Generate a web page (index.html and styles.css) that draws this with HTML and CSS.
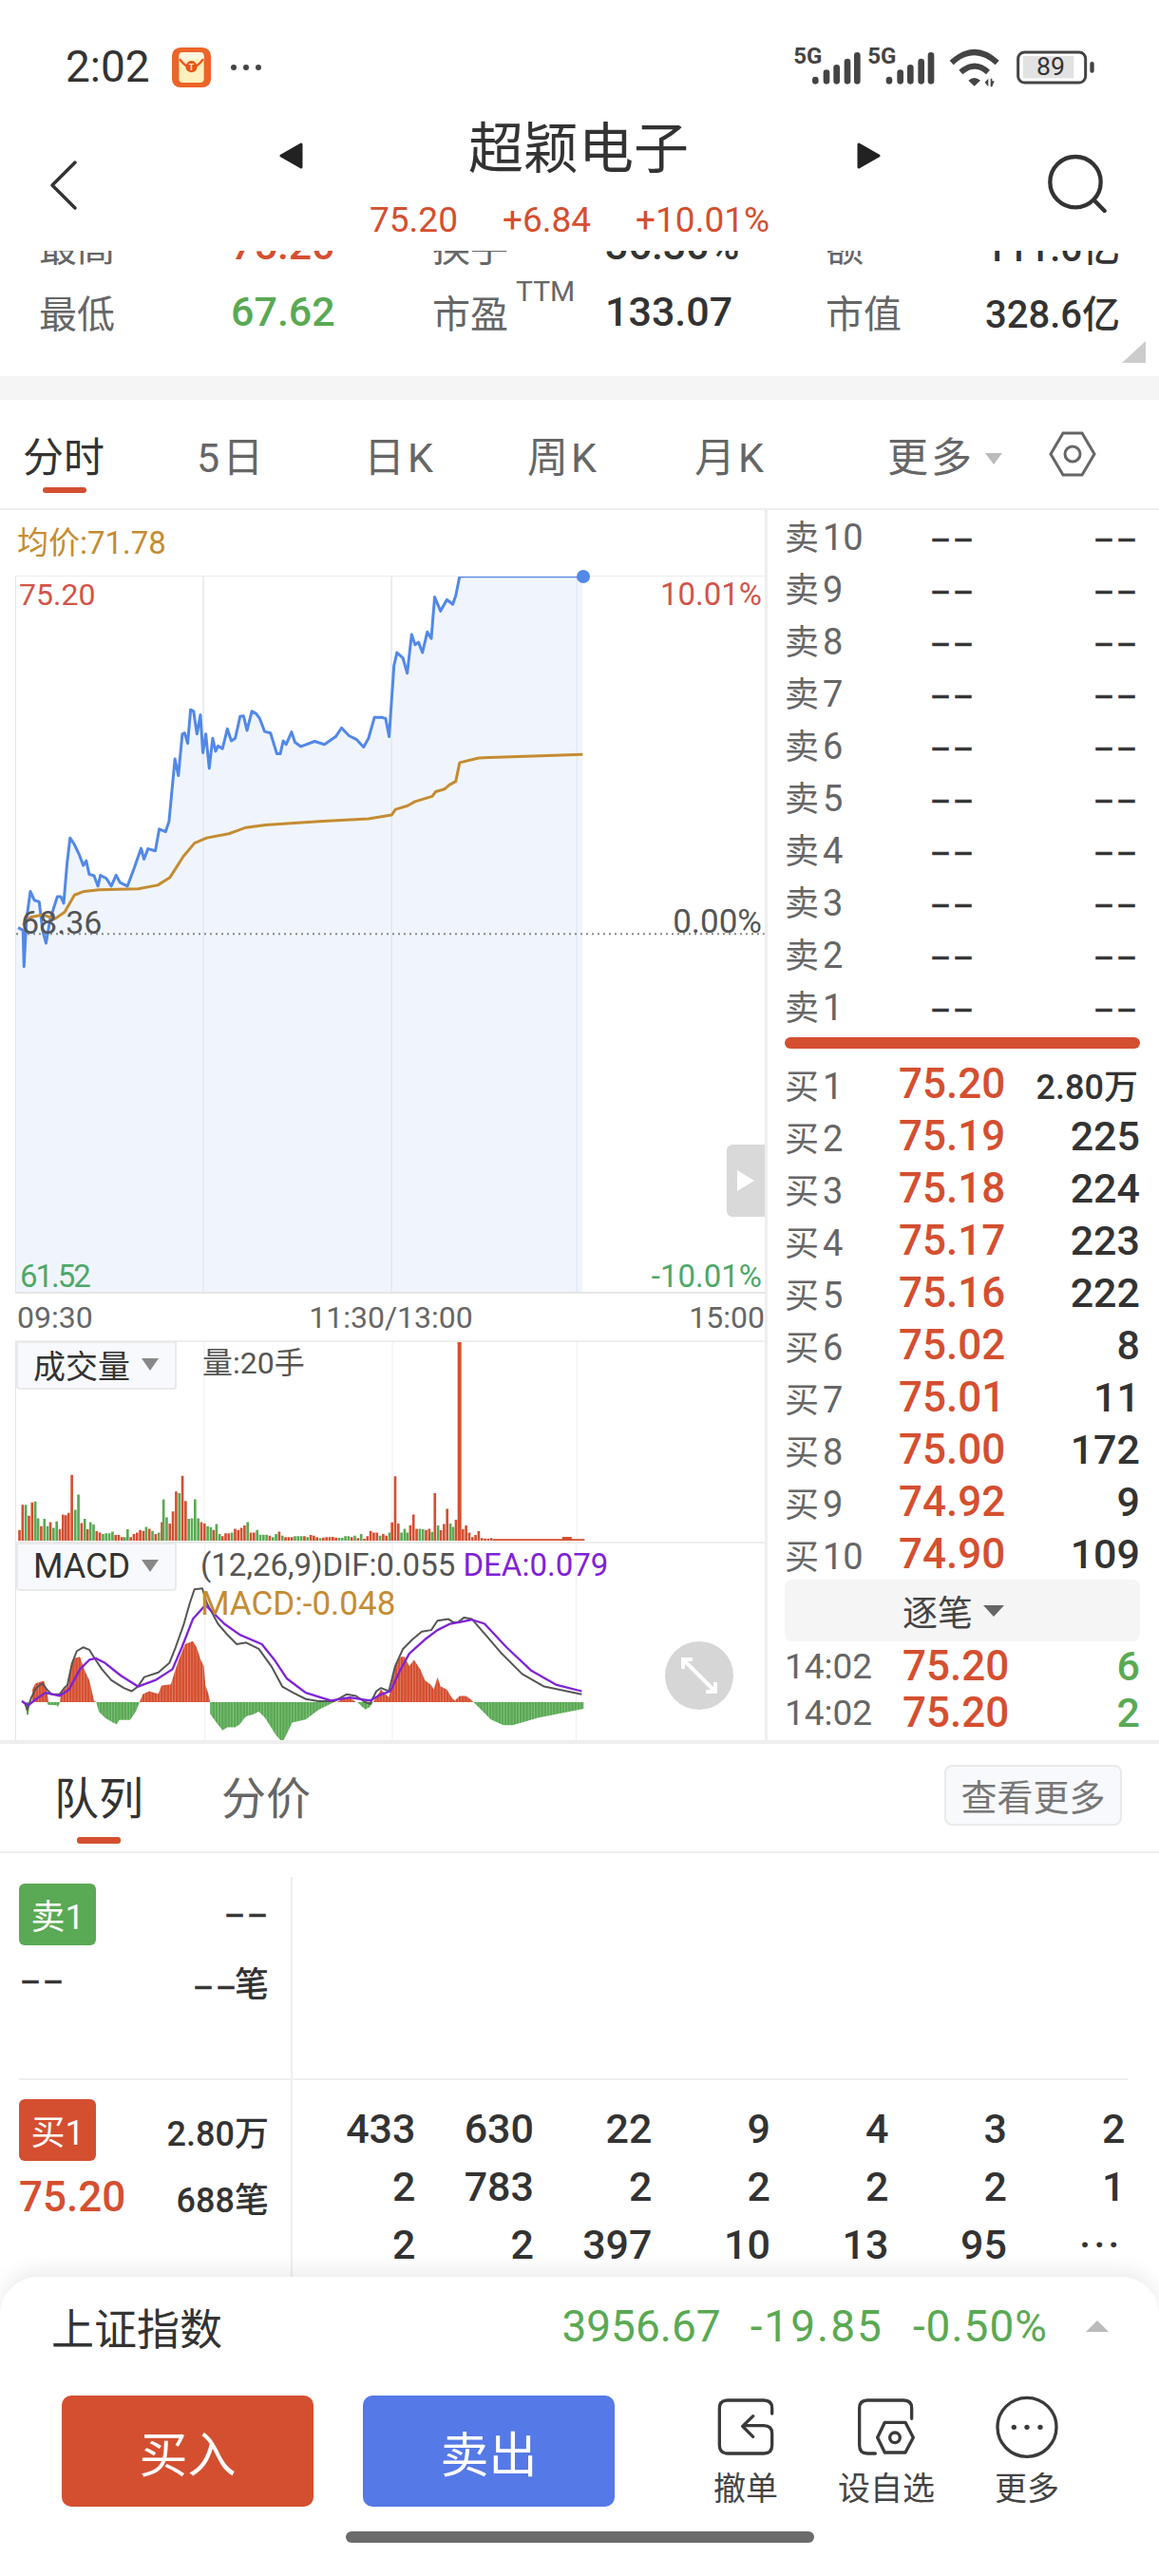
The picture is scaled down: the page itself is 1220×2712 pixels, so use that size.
FILE: index.html
```html
<!DOCTYPE html>
<html lang="zh-CN">
<head>
    <meta charset="UTF-8">
    <title>超颖电子</title>
    <link rel="stylesheet" href="styles.css">
</head>
<body>
<div class="page">
    <!-- status bar -->
    <div class="status">
        <span class="clock">2:02</span>
        <svg class="app-badge" viewBox="0 0 122 125">
            <rect width="122" height="125" rx="26" fill="#ec6428"/>
            <rect x="22" y="15" width="78" height="95" rx="12" fill="#fdf0bc"/>
            <path d="M22 28q0-13 13-13h52q13 0 13 13v10H22z" fill="#fff6e0"/>
            <path d="M24 36q18 26 37 26t37-26" fill="none" stroke="#e8541c" stroke-width="7"/>
            <circle cx="61" cy="60" r="18" fill="#e8541c"/>
            <text x="61" y="70" text-anchor="middle" class="badge-t">T</text>
        </svg>
        <svg class="more-dots" viewBox="0 0 32 6"><circle cx="3" cy="3" r="3"/><circle cx="16" cy="3" r="3"/><circle cx="29" cy="3" r="3"/></svg>
        <svg class="sys-icons" viewBox="0 0 1020 180">
            <text x="46" y="80" class="net">5G</text>
            <path class="sig" d="M115 132v4M150 110v26M182 94v42M216 75v61M247 55v81"/>
            <text x="280" y="80" class="net">5G</text>
            <path class="sig" d="M348 132v4M383 110v26M415 94v42M449 75v61M480 55v81"/>
            <path class="wifi" d="M545 78q72-66 144 0M574 108q43-38 86 0"/>
            <path d="M598 134q19-16 38 0l-19 18z" fill="#444"/>
            <path d="M650 140l11-12v26zM668 128h5v8h7l-7 18h-5z" fill="#444"/>
            <rect x="755" y="45" width="213" height="96" rx="20" class="bat"/>
            <rect x="771" y="57" width="160" height="70" fill="#e2e2e2"/>
            <text x="858" y="118" text-anchor="middle" class="bat-num">89</text>
            <rect x="982" y="75" width="13" height="35" rx="6" fill="#444"/>
        </svg>
    </div>

    <!-- title bar -->
    <div class="nav">
        <div class="nav-back">
            <svg width="32" height="54" viewBox="0 0 32 54"><path d="M28 3 4 27l24 24" class="line-icon"/></svg>
        </div>
        <svg class="nav-arrow" viewBox="0 0 25 28"><path d="M23 2 2 14l21 12z" fill="#222" stroke="#222" stroke-width="3" stroke-linejoin="round"/></svg>
        <div class="nav-title">
            <div class="stock-name">超颖电子</div>
            <div class="stock-price"><span>75.20</span><span>+6.84</span><span>+10.01%</span></div>
        </div>
        <svg class="nav-arrow" viewBox="0 0 25 28"><path d="M2 2l21 12L2 26z" fill="#222" stroke="#222" stroke-width="3" stroke-linejoin="round"/></svg>
        <svg class="nav-search" viewBox="70 30 192 192"><circle cx="160" cy="125" r="80" class="search-ring"/><path d="M222 185l30 31" class="search-ring"/></svg>
    </div>

    <!-- quote summary, top row is scrolled under the title bar -->
    <div class="stats">
        <div class="stat-row">
            <span>最高</span><b class="red">75.20</b>
            <span>换手</span><b>36.30%</b>
            <span>额</span><b class="small">111.6亿</b>
        </div>
        <div class="stat-row">
            <span>最低</span><b class="green">67.62</b>
            <span>市盈<sup>TTM</sup></span><b>133.07</b>
            <span>市值</span><b class="small">328.6亿</b>
        </div>
        <div class="corner"></div>
    </div>
    <div class="band"></div>

    <!-- period tabs -->
    <div class="tabs">
        <span class="tab active">分时</span>
        <span class="tab">5日</span>
        <span class="tab">日K</span>
        <span class="tab">周K</span>
        <span class="tab">月K</span>
        <span class="tab">更多<i class="tab-caret"></i></span>
        <svg class="tab-hex" viewBox="0 0 50 50"><path d="M15 3h20l13 22-13 22H15L2 25z" class="hex"/><circle cx="25" cy="25" r="8" class="hex"/></svg>
    </div>

    <div class="market">
        <div class="charts">
            <div class="avg">均价:71.78</div>
            <div class="price-chart">
                <svg viewBox="31 138.5 1527.5 1378" preserveAspectRatio="none">
                    <path d="M35 815 45 820 47 890 52 800 60 745 68 762 78 765 85 820 92 845 100 800 115 755 122 755 128 768 135 690 141 642 150 655 160 675 168 695 174 686 180 712 190 715 198 735 203 714 215 720 225 735 235 714 243 728 258 735 272 700 286 662 292 683 300 663 315 667 323 625 336 630 343 610 355 490 362 522 370 442 375 440 381 460 387 395 393 398 400 442 407 405 412 478 418 442 425 508 432 450 438 475 443 465 452 470 462 432 470 455 478 450 488 408 495 407 502 435 512 398 520 402 528 412 538 437 550 440 563 480 570 480 576 455 582 462 593 438 600 458 612 466 640 456 660 462 683 447 695 430 710 445 725 452 740 467 750 450 762 410 778 410 785 412 792 447 802 310 808 285 820 295 829 325 838 250 845 270 852 265 860 285 870 245 878 258 885 178 897 205 910 183 922 192 928 175 936 138H1187V1517H31V815Z" fill="#f0f5fd"/>
                    <path d="M413 138V1517M797 138V1517M1175 138V1517" class="grid-line"/>
                    <path d="M31 827H1558" class="zero-line"/>
                    <path d="M35 815 45 820 47 890 52 800 60 745 68 762 78 765 85 820 92 845 100 800 115 755 122 755 128 768 135 690 141 642 150 655 160 675 168 695 174 686 180 712 190 715 198 735 203 714 215 720 225 735 235 714 243 728 258 735 272 700 286 662 292 683 300 663 315 667 323 625 336 630 343 610 355 490 362 522 370 442 375 440 381 460 387 395 393 398 400 442 407 405 412 478 418 442 425 508 432 450 438 475 443 465 452 470 462 432 470 455 478 450 488 408 495 407 502 435 512 398 520 402 528 412 538 437 550 440 563 480 570 480 576 455 582 462 593 438 600 458 612 466 640 456 660 462 683 447 695 430 710 445 725 452 740 467 750 450 762 410 778 410 785 412 792 447 802 310 808 285 820 295 829 325 838 250 845 270 852 265 860 285 870 245 878 258 885 178 897 205 910 183 922 192 928 175 936 138H1187" class="price-line"/>
                    <path d="M45 810 60 795 85 790 110 798 130 785 150 752 170 745 200 742 280 740 320 733 345 718 372 678 395 652 420 642 465 634 500 622 540 617 650 610 750 605 797 598 805 587 830 580 845 572 880 562 887 553 905 548 915 540 928 533 936 497 975 488 1100 484 1187 481" class="avg-line"/>
                </svg>
                <i class="last-dot"></i>
                <span class="pl top-l red-soft">75.20</span>
                <span class="pl top-r red-soft">10.01%</span>
                <span class="pl mid-l">68.36</span>
                <span class="pl mid-r">0.00%</span>
                <span class="pl bot-l green-soft">61.52</span>
                <span class="pl bot-r green-soft">-10.01%</span>
                <div class="side-handle"><i></i></div>
            </div>
            <div class="times"><span>09:30</span><span>11:30/13:00</span><span>15:00</span></div>

            <div class="sub-panel">
                <svg viewBox="48 36 2367 633">
                    <path d="M639 36V669M1236 36V669M1822 36V669" class="sub-grid"/>
                    <path class="vol-r" d="M53 632V666M63 552V666M83 587V666M93 545V666M122 620V666M151 607V666M181 630V666M191 583V666M200 585V666M209 578V666M219 457V666M250 610V666M269 630V666M298 636V666M308 640V666M358 648V666M368 648V666M378 655V666M406 655V666M416 645V666M426 640V666M436 632V666M446 635V666M465 628V666M485 645V666M505 607V666M530 612V666M540 573V666M550 510V666M570 460V666M580 540V666M630 607V666M640 612V666M669 632V666M697 652V666M707 643V666M717 643V666M737 628V666M747 632V666M757 625V666M767 618V666M787 640V666M797 640V666M847 650V666M877 637V666M897 655V666M907 655V666M917 655V666M957 652V666M977 648V666M987 650V666M997 655V666M1017 656V666M1027 655V666M1037 655V666M1047 654V666M1057 656V666M1107 655V666M1127 658V666M1147 660V666M1157 652V666M1167 635V666M1177 640V666M1187 640V666M1207 645V666M1217 650V666M1235 608V666M1245 462V666M1255 612V666M1293 617V666M1303 583V666M1313 628V666M1343 632V666M1353 628V666M1371 515V666M1390 633V666M1400 613V666M1410 565V666M1438 600V666M1460 630V666M1470 618V666M1480 640V666M1490 655V666M1500 648V666M1510 636V666M1520 658V666M1530 659V666M1540 660V666M1550 658V666"/>
                    <path class="vol-g" d="M73 552V666M103 542V666M112 595V666M132 597V666M142 620V666M161 625V666M171 605V666M230 568V666M240 520V666M260 597V666M278 607V666M288 615V666M318 645V666M328 643V666M338 643V666M348 637V666M387 655V666M396 630V666M455 622V666M475 635V666M495 640V666M510 535V666M520 592V666M560 515V666M590 597V666M600 595V666M610 535V666M620 595V666M650 620V666M660 623V666M678 613V666M688 645V666M727 640V666M777 607V666M807 632V666M817 647V666M827 647V666M837 647V666M857 655V666M867 645V666M887 650V666M927 652V666M937 652V666M947 652V666M967 655V666M1007 658V666M1067 657V666M1077 657V666M1087 652V666M1097 652V666M1117 650V666M1137 645V666M1197 650V666M1227 640V666M1265 640V666M1275 628V666M1284 640V666M1323 628V666M1333 630V666M1362 638V666M1381 618V666M1420 612V666M1429 622V666"/>
                    <rect x="1443" y="36" width="12" height="630" fill="#d44f30"/>
                    <path d="M1555 661H1775V654H1805V661H1846V666H1555Z" fill="#d44f30"/>
                </svg>
                <div class="sub-tag">成交量<i class="tag-caret"></i></div>
                <div class="sub-info vol-info">量:20手</div>
            </div>

            <div class="sub-panel macd">
                <svg viewBox="48 669 2367 627">
                    <defs>
                        <pattern id="barsRed" width="9.7" height="10" patternUnits="userSpaceOnUse"><rect width="9.7" height="10" fill="#d44f30"/><rect width="1.6" height="10" fill="#eb9a84"/></pattern>
                        <pattern id="barsGreen" width="9.7" height="10" patternUnits="userSpaceOnUse"><rect width="9.7" height="10" fill="#5aa954"/><rect width="1.6" height="10" fill="#9fd09b"/></pattern>
                    </defs>
                    <path d="M639 669V1296M1236 669V1296M1822 669V1296" class="sub-grid"/>
                    <path fill="url(#barsRed)" d="M88 1175V1135L98 1115 125 1107 135 1140 140 1175ZM176 1175 180 1145 200 1125 212 1060 222 1035 240 1030 250 1060 258 1080 270 1105 278 1140 285 1170 292 1175ZM430 1175 440 1150 460 1140 490 1148 500 1122 530 1118 540 1085 555 1040 575 990 600 980 612 1000 625 1040 635 1060 640 1120 650 1150 655 1175ZM1060 1175 1075 1165 1100 1160 1120 1175ZM1175 1175 1200 1135 1225 1160 1245 1060 1262 1030 1275 1030 1290 1060 1305 1040 1325 1070 1340 1105 1360 1120 1368 1135 1380 1095 1390 1125 1410 1135 1425 1160 1435 1170 1450 1155 1470 1155 1485 1165 1495 1175Z"/>
                    <path fill="url(#barsGreen)" d="M68 1175 70 1215H76L80 1175ZM135 1175 138 1183 165 1185 170 1190 176 1175ZM292 1175 300 1205 320 1225 345 1240 358 1245 365 1232H400L418 1205 430 1175ZM655 1175V1212L675 1240 695 1265 710 1255H735L750 1245 765 1225 775 1218 790 1215 810 1205 830 1225 865 1280 880 1297 890 1295 905 1265 917 1240 960 1230 1000 1200 1050 1175ZM1125 1175 1140 1190 1150 1198 1165 1190 1175 1175ZM1495 1175 1520 1200 1550 1230 1590 1248H1620L1700 1225 1846 1196V1175Z"/>
                    <path class="dif" d="M55 1172 65 1180 72 1200 85 1160 100 1130 120 1115 135 1135 150 1150H175L190 1130 200 1120 215 1050 230 1012 250 1000 270 1008 290 1040 310 1070 340 1105 380 1130 405 1140 425 1125 445 1095 490 1080 525 1050 545 1000 570 930 590 860 605 815 630 812 645 860 680 925 710 960 740 990 770 985 810 1005 850 1060 885 1125 920 1145 960 1165 1000 1172H1050L1090 1150 1120 1155 1150 1175 1165 1180 1185 1140 1200 1130 1225 1140 1245 1060 1270 1005 1300 975 1330 950 1360 945 1380 915 1415 910 1430 920H1445L1465 905 1490 910 1520 945 1580 1015 1650 1085 1720 1125 1840 1150"/>
                    <path class="dea" d="M55 1172 75 1185 100 1165 130 1145 175 1155 205 1135 240 1070 270 1040 290 1035 320 1050 370 1090 425 1125 480 1105 535 1070 565 1000 600 910 640 865 700 925 750 960 820 990 860 1040 900 1100 960 1145 1040 1170 1100 1160 1165 1170 1200 1150 1230 1140 1260 1075 1290 1020 1340 975 1380 945 1420 925 1450 920 1490 912 1530 925 1600 1000 1680 1075 1760 1120 1840 1140"/>
                </svg>
                <div class="sub-tag tag-latin">MACD<i class="tag-caret"></i></div>
                <div class="sub-info macd-info">
                    <div>(12,26,9)DIF:0.055 <span class="purple">DEA:0.079</span></div>
                    <div class="gold">MACD:-0.048</div>
                </div>
                <div class="expand">
                    <svg width="42" height="42" viewBox="0 0 42 42"><path d="M4 14V4H14M4 4l34 34M28 38H38V28" class="expand-arrow"/></svg>
                </div>
            </div>
        </div>

        <!-- order book -->
        <div class="book">
            <div class="book-row"><span class="lvl">卖<span>10</span></span><span class="px"><span class="dash">--</span></span><span class="qty"><span class="dash">--</span></span></div>
            <div class="book-row"><span class="lvl">卖<span>9</span></span><span class="px"><span class="dash">--</span></span><span class="qty"><span class="dash">--</span></span></div>
            <div class="book-row"><span class="lvl">卖<span>8</span></span><span class="px"><span class="dash">--</span></span><span class="qty"><span class="dash">--</span></span></div>
            <div class="book-row"><span class="lvl">卖<span>7</span></span><span class="px"><span class="dash">--</span></span><span class="qty"><span class="dash">--</span></span></div>
            <div class="book-row"><span class="lvl">卖<span>6</span></span><span class="px"><span class="dash">--</span></span><span class="qty"><span class="dash">--</span></span></div>
            <div class="book-row"><span class="lvl">卖<span>5</span></span><span class="px"><span class="dash">--</span></span><span class="qty"><span class="dash">--</span></span></div>
            <div class="book-row"><span class="lvl">卖<span>4</span></span><span class="px"><span class="dash">--</span></span><span class="qty"><span class="dash">--</span></span></div>
            <div class="book-row"><span class="lvl">卖<span>3</span></span><span class="px"><span class="dash">--</span></span><span class="qty"><span class="dash">--</span></span></div>
            <div class="book-row"><span class="lvl">卖<span>2</span></span><span class="px"><span class="dash">--</span></span><span class="qty"><span class="dash">--</span></span></div>
            <div class="book-row"><span class="lvl">卖<span>1</span></span><span class="px"><span class="dash">--</span></span><span class="qty"><span class="dash">--</span></span></div>
            <div class="book-split"></div>
            <div class="book-row"><span class="lvl">买<span>1</span></span><span class="px red">75.20</span><span class="qty qty-sm">2.80万</span></div>
            <div class="book-row"><span class="lvl">买<span>2</span></span><span class="px red">75.19</span><span class="qty">225</span></div>
            <div class="book-row"><span class="lvl">买<span>3</span></span><span class="px red">75.18</span><span class="qty">224</span></div>
            <div class="book-row"><span class="lvl">买<span>4</span></span><span class="px red">75.17</span><span class="qty">223</span></div>
            <div class="book-row"><span class="lvl">买<span>5</span></span><span class="px red">75.16</span><span class="qty">222</span></div>
            <div class="book-row"><span class="lvl">买<span>6</span></span><span class="px red">75.02</span><span class="qty">8</span></div>
            <div class="book-row"><span class="lvl">买<span>7</span></span><span class="px red">75.01</span><span class="qty">11</span></div>
            <div class="book-row"><span class="lvl">买<span>8</span></span><span class="px red">75.00</span><span class="qty">172</span></div>
            <div class="book-row"><span class="lvl">买<span>9</span></span><span class="px red">74.92</span><span class="qty">9</span></div>
            <div class="book-row"><span class="lvl">买<span>10</span></span><span class="px red">74.90</span><span class="qty">109</span></div>
            <div class="tick-head">逐笔<i class="tick-caret"></i></div>
            <div class="tick-row"><span class="tick-time">14:02</span><span class="tick-px red">75.20</span><span class="qty green">6</span></div>
            <div class="tick-row"><span class="tick-time">14:02</span><span class="tick-px red">75.20</span><span class="qty green">2</span></div>
        </div>
    </div>

    <!-- order queue -->
    <div class="queue-head">
        <span class="q-tab active">队列</span>
        <span class="q-tab">分价</span>
        <span class="see-more">查看更多</span>
    </div>
    <div class="queue">
        <div class="q-sell">
            <div class="q-side">
                <div class="q-line"><span class="tag tag-sell">卖1</span><span class="dash">--</span></div>
                <div class="q-line q-line2"><span class="dash">--</span><span class="q-count"><span class="dash">--</span>笔</span></div>
            </div>
        </div>
        <div class="q-buy">
            <div class="q-side">
                <div class="q-line"><span class="tag tag-buy">买1</span><span class="q-vol">2.80万</span></div>
                <div class="q-line q-line3"><span class="q-price red">75.20</span><span class="q-vol">688笔</span></div>
            </div>
            <div class="q-grid">
                <span>433</span><span>630</span><span>22</span><span>9</span><span>4</span><span>3</span><span>2</span>
                <span>2</span><span>783</span><span>2</span><span>2</span><span>2</span><span>2</span><span>1</span>
                <span>2</span><span>2</span><span>397</span><span>10</span><span>13</span><span>95</span><span class="q-more">···</span>
            </div>
        </div>
    </div>

    <!-- bottom sheet -->
    <div class="sheet">
        <div class="index-row">
            <span class="index-name">上证指数</span>
            <span class="index-nums"><span>3956.67</span><span class="wide">-19.85</span><span class="wider">-0.50%</span></span>
            <i class="index-caret"></i>
        </div>
        <div class="actions">
            <div class="btn btn-buy">买入</div>
            <div class="btn btn-sell">卖出</div>
            <div class="action">
                <svg viewBox="36 35 198 198"><path d="M218 92V75Q218 50 192 50H78Q52 50 52 76V192Q52 218 78 218H192Q218 218 218 192V155Q218 130 192 130H130M158 100 125 132 158 165" class="act-line"/></svg>
                <span>撤单</span>
            </div>
            <div class="action">
                <svg viewBox="481 35 198 198"><path d="M660 108V75Q660 50 635 50H520Q495 50 495 75V192Q495 218 520 218H545M575 120H640L665 168 640 215H575L552 168Z" class="act-line"/><circle cx="607" cy="168" r="16" class="act-line"/></svg>
                <span>设自选</span>
            </div>
            <div class="action">
                <svg viewBox="927 35 198 198"><circle cx="1026" cy="135" r="93" class="act-line"/><circle cx="985" cy="135" r="8" fill="#3a3a3a"/><circle cx="1026" cy="135" r="8" fill="#3a3a3a"/><circle cx="1068" cy="135" r="8" fill="#3a3a3a"/></svg>
                <span>更多</span>
            </div>
        </div>
        <div class="home-bar"></div>
    </div>
</div>
</body>
</html>
```
FILE: styles.css
```css
* {
    box-sizing: border-box;
}

body {
    margin: 0;
    background: #fff;
    font-family: Roboto, "Noto Sans CJK SC", sans-serif;
    color: #333;
}

.page {
    position: relative;
    width: 1220px;
    height: 2712px;
    overflow: hidden;
    background: #fff;
}

.red { color: #d44f30; }
.green { color: #5aa954; }
.purple { color: #7f22d8; }
.gold { color: #c58c32; }
.red-soft { color: #d2544a; }
.green-soft { color: #4da868; }

/* status bar */
.status {
    display: flex;
    height: 100px;
    padding: 40px 60px 0 69px;
}

.clock {
    font-size: 46px;
    line-height: 60px;
    color: #333;
}

.app-badge {
    width: 41px;
    height: 42px;
    margin: 10px 0 0 23px;
}

.badge-t {
    font: 700 28px Roboto, sans-serif;
    fill: #fdf0bc;
}

.more-dots {
    width: 32px;
    height: 6px;
    margin: 28px 0 0 21px;
    fill: #444;
}

.sys-icons {
    width: 340px;
    height: 60px;
    margin-left: auto;
}

.net {
    font: 700 72px Roboto, sans-serif;
    fill: #444;
}

.sig {
    stroke: #444;
    stroke-width: 20px;
    stroke-linecap: round;
    fill: none;
}

.wifi {
    stroke: #444;
    stroke-width: 18px;
    fill: none;
}

.bat {
    fill: none;
    stroke: #444;
    stroke-width: 9px;
}

.bat-num {
    font: 400 80px Roboto, sans-serif;
    fill: #333;
}

/* title bar */
.nav {
    display: flex;
    align-items: flex-start;
    height: 164px;
}

.nav-back {
    width: 294px;
    padding: 68px 0 0 51px;
}

.line-icon {
    fill: none;
    stroke: #333;
    stroke-width: 3.5px;
    stroke-linecap: round;
    stroke-linejoin: round;
}

.nav-arrow {
    width: 25px;
    height: 28px;
    margin-top: 50px;
}

.nav-title {
    width: 583px;
    padding-top: 27px;
}

.stock-name {
    padding-left: 174px;
    font-size: 58px;
    line-height: 60px;
    color: #333;
}

.stock-price {
    display: flex;
    gap: 47px;
    padding-left: 70px;
    margin-top: 23px;
    font-size: 37px;
    line-height: 44px;
    color: #d44f30;
}

.nav-search {
    width: 64px;
    height: 64px;
    margin: 60px 0 0 175px;
}

.search-ring {
    fill: none;
    stroke: #333;
    stroke-width: 13px;
    stroke-linecap: round;
}

/* stats */
.stats {
    position: relative;
    display: flex;
    flex-direction: column;
    justify-content: flex-end;
    height: 132px;
    padding: 0 0 33px 41px;
    overflow: hidden;
}

.stat-row {
    display: grid;
    flex: none;
    grid-template-columns: 202px 212px 182px 232px 168px 142px;
    align-items: center;
    height: 70px;
    font-size: 40px;
    color: #666;
    white-space: nowrap;
}

.stat-row b {
    font-size: 43px;
    font-weight: 500;
    color: #333;
}

.stat-row b.red { color: #d44f30; }
.stat-row b.green { color: #5aa954; }

.stat-row b.small {
    font-size: 40px;
    text-align: right;
}

.stat-row sup {
    position: relative;
    top: -28px;
    margin-left: 8px;
    font-size: 30px;
    line-height: 0;
    vertical-align: baseline;
}

.corner {
    position: absolute;
    right: 14px;
    bottom: 14px;
    border-left: 25px solid transparent;
    border-bottom: 23px solid #ccc;
}

.band {
    height: 25px;
    background: #f5f5f5;
}

/* period tabs */
.tabs {
    display: grid;
    grid-template-columns: 183px 176px 172px 176px 203px 170px 50px;
    align-items: center;
    height: 116px;
    padding-left: 24px;
    border-bottom: 2px solid #eee;
}

.tab {
    position: relative;
    font-size: 43px;
    letter-spacing: 3px;
    color: #666;
}

.tab.active {
    letter-spacing: 0;
    color: #333;
}

.tab.active::after {
    content: "";
    position: absolute;
    left: 21px;
    bottom: -10px;
    width: 46px;
    height: 6px;
    border-radius: 3px;
    background: #d44f30;
}

.tab-caret {
    display: inline-block;
    margin-left: 11px;
    border-left: 9px solid transparent;
    border-right: 9px solid transparent;
    border-top: 12px solid #bbb;
    vertical-align: 8px;
}

.tab-hex {
    width: 50px;
    height: 50px;
}

.hex {
    fill: none;
    stroke: #666;
    stroke-width: 3px;
}

/* charts */
.market {
    display: flex;
    height: 1299px;
    border-bottom: 4px solid #eee;
}

.charts {
    flex: none;
    width: 808px;
    padding-left: 16px;
    border-right: 3px solid #eee;
}

.avg {
    height: 69px;
    margin-left: 2px;
    padding-top: 15px;
    font-size: 33px;
    line-height: 40px;
    color: #c58c32;
}

.price-chart {
    position: relative;
    height: 756px;
    border-top: 1px solid #eee;
    border-bottom: 2px solid #e6e6e6;
    border-left: 1px solid #e6e6e6;
}

.price-chart svg {
    display: block;
    width: 100%;
    height: 100%;
}

.grid-line {
    fill: none;
    stroke: #e4e8ef;
    stroke-width: 1.5px;
    vector-effect: non-scaling-stroke;
}

.zero-line {
    fill: none;
    stroke: #888;
    stroke-width: 2px;
    stroke-dasharray: 2 4;
    vector-effect: non-scaling-stroke;
}

.price-line {
    fill: none;
    stroke: #5288e8;
    stroke-width: 3px;
    stroke-linejoin: round;
    vector-effect: non-scaling-stroke;
}

.avg-line {
    fill: none;
    stroke: #c58c32;
    stroke-width: 3px;
    stroke-linejoin: round;
    vector-effect: non-scaling-stroke;
}

.last-dot {
    position: absolute;
    left: 590px;
    top: -7px;
    width: 14px;
    height: 14px;
    border-radius: 50%;
    background: #5288e8;
}

.pl {
    position: absolute;
    font-size: 33px;
    line-height: 40px;
    color: #555;
}

.pl.red-soft { color: #d2544a; }
.pl.green-soft { color: #4da868; }

.top-l { left: 3px; top: -1px; font-size: 32px; }
.top-r { right: 3px; top: -1px; }
.mid-l { left: 5px; top: 344px; font-size: 34px; }
.mid-r { right: 3px; top: 344px; font-size: 35px; }
.bot-l { left: 4px; top: 717px; letter-spacing: -2px; }
.bot-r { right: 3px; top: 717px; }

.side-handle {
    position: absolute;
    right: 0;
    top: 598px;
    display: flex;
    align-items: center;
    justify-content: center;
    width: 40px;
    height: 76px;
    border-radius: 6px 0 0 6px;
    background: #d9d9d9;
}

.side-handle i {
    border-top: 11px solid transparent;
    border-bottom: 11px solid transparent;
    border-left: 18px solid #fff;
}

.times {
    display: flex;
    justify-content: space-between;
    align-items: center;
    height: 49px;
    padding-left: 2px;
    font-size: 32px;
    color: #666;
}

.sub-panel {
    position: relative;
    height: 212px;
    border-top: 2px solid #eee;
    border-left: 1px solid #e6e6e6;
}

.sub-panel svg {
    display: block;
}

.sub-panel > svg {
    width: 789px;
    height: 210px;
}

.macd {
    height: 209px;
}

.macd > svg {
    height: 207px;
}

.sub-grid {
    fill: none;
    stroke: #eee;
    stroke-width: 3px;
}

.vol-r, .vol-g {
    fill: none;
    stroke-width: 8px;
}

.vol-r { stroke: #d44f30; }
.vol-g { stroke: #5aa954; }

.dif, .dea {
    fill: none;
    stroke-linejoin: round;
}

.dif { stroke: #555; stroke-width: 6px; }
.dea { stroke: #7f22d8; stroke-width: 7px; }

.sub-tag {
    position: absolute;
    left: 0;
    top: -1px;
    display: flex;
    align-items: center;
    width: 169px;
    height: 51px;
    padding: 0 0 2px 16px;
    border: 2px solid #eaeaea;
    border-radius: 0 0 4px 4px;
    background: #f8f9fc;
    font-size: 34px;
    color: #333;
}

.tag-latin {
    font-size: 36px;
}

.tag-caret {
    margin-left: 12px;
    border-left: 9px solid transparent;
    border-right: 9px solid transparent;
    border-top: 13px solid #888;
}

.sub-info {
    position: absolute;
    left: 194px;
    font-size: 33px;
    line-height: 40px;
    color: #555;
    white-space: nowrap;
}

.vol-info { left: 196px; top: 2px; font-size: 32px; }
.macd-info { top: 2px; line-height: 41px; }
.macd-info .gold { font-size: 35px; }

.expand {
    position: absolute;
    left: 683px;
    top: 103px;
    display: flex;
    align-items: center;
    justify-content: center;
    width: 72px;
    height: 72px;
    border-radius: 50%;
    background: #d6d6d6;
}

.expand-arrow {
    fill: none;
    stroke: #fff;
    stroke-width: 4px;
}

/* order book */
.book {
    flex: 1;
    margin-top: -2px;
    padding: 0 20px 0 18px;
}

.book-row {
    display: grid;
    grid-template-columns: 120px 111px 1fr;
    align-items: center;
    height: 55px;
}

.lvl {
    font-size: 36px;
    color: #666;
    white-space: nowrap;
}

.lvl span {
    margin-left: 4px;
    font-size: 38px;
}

.px {
    font-size: 44px;
    font-weight: 500;
    text-align: right;
}

.px .dash {
    margin-right: 31px;
}

.qty {
    font-size: 43px;
    font-weight: 500;
    text-align: right;
    color: #333;
}

.qty .dash {
    margin-right: 2px;
}

.qty-sm {
    padding-right: 2px;
    font-size: 36px;
}

.qty.green { color: #5aa954; }

.dash {
    font-family: "Noto Sans CJK SC", sans-serif;
    font-variant-east-asian: full-width;
    font-size: 24px;
    font-weight: 900;
    color: #333;
    -webkit-text-stroke: 0.6px #333;
}

.book-split {
    height: 12px;
    margin: 7px 0 9px;
    border-radius: 6px;
    background: #d44f30;
}

.tick-head {
    display: flex;
    align-items: center;
    justify-content: center;
    height: 65px;
    padding-right: 19px;
    border-radius: 8px;
    background: #f5f5f5;
    font-size: 37px;
    color: #444;
}

.tick-caret {
    margin-left: 11px;
    border-left: 11px solid transparent;
    border-right: 11px solid transparent;
    border-top: 12px solid #666;
}

.tick-row {
    display: grid;
    grid-template-columns: 124px 112px 1fr;
    align-items: center;
    height: 49px;
}

.tick-time {
    font-size: 37px;
    color: #666;
}

.tick-px {
    font-size: 44px;
    font-weight: 500;
    text-align: right;
}

/* queue */
.queue-head {
    display: flex;
    align-items: center;
    height: 115px;
    padding: 0 39px 6px 57px;
    border-bottom: 2px solid #eee;
}

.q-tab {
    position: relative;
    margin-right: 82px;
    font-size: 47px;
    color: #666;
}

.q-tab.active {
    color: #333;
}

.q-tab.active::after {
    content: "";
    position: absolute;
    left: 24px;
    bottom: -17px;
    width: 46px;
    height: 7px;
    border-radius: 3px;
    background: #d44f30;
}

.see-more {
    display: flex;
    align-items: center;
    justify-content: center;
    width: 187px;
    height: 64px;
    margin-left: auto;
    border: 2px solid #eaeaea;
    border-radius: 8px;
    background: #f8f9fc;
    font-size: 38px;
    color: #777;
}

.queue {
    margin: 25px 33px 0 20px;
}

.q-sell {
    height: 214px;
    border-bottom: 2px solid #eee;
}

.q-buy {
    display: flex;
}

.q-side {
    flex: none;
    width: 288px;
    height: 100%;
    padding-right: 23px;
    border-right: 2px solid #eee;
}

.q-sell .q-side {
    padding-top: 7px;
}

.q-buy .q-side {
    height: 220px;
    padding-top: 20px;
}

.q-line {
    display: flex;
    align-items: center;
    justify-content: space-between;
    height: 65px;
}

.q-line2 {
    margin-top: 5px;
}

.q-line3 {
    margin-top: 5px;
}

.tag {
    display: flex;
    align-items: center;
    justify-content: center;
    width: 81px;
    height: 65px;
    padding-bottom: 2px;
    border-radius: 6px;
    font-size: 36px;
    color: #fff;
}

.tag-sell { background: #5aa954; }
.tag-buy { background: #d44f30; }

.q-count {
    font-size: 36px;
    font-weight: 500;
}

.q-count .dash {
    margin-right: -3px;
}

.q-vol {
    font-size: 36px;
    font-weight: 500;
    color: #333;
}

.q-price {
    font-size: 44px;
    font-weight: 500;
}

.q-grid {
    display: grid;
    grid-template-columns: repeat(7, 124.5px);
    grid-auto-rows: 61px;
    align-items: center;
    margin: 20px 0 0 5px;
    font-size: 43px;
    font-weight: 500;
    text-align: right;
    color: #333;
}

.q-more {
    padding-right: 3px;
    letter-spacing: 3px;
}

/* bottom sheet, sits over the queue */
.sheet {
    position: absolute;
    left: 0;
    right: 0;
    bottom: 0;
    height: 315px;
    border-radius: 40px 40px 0 0;
    background: #fff;
    box-shadow: 0 -8px 20px rgba(0, 0, 0, 0.07);
}

.index-row {
    display: flex;
    align-items: center;
    height: 104px;
    padding: 0 53px 0 54px;
}

.index-name {
    font-size: 45px;
    color: #333;
}

.index-nums {
    display: flex;
    gap: 31px;
    margin-left: auto;
    font-size: 46px;
    color: #5aa954;
}

.index-nums .wide { letter-spacing: 2px; }
.index-nums .wider { letter-spacing: 1px; }

.index-caret {
    margin-left: 40px;
    border-left: 12px solid transparent;
    border-right: 12px solid transparent;
    border-bottom: 12px solid #bbb;
}

.actions {
    display: flex;
    margin-top: 21px;
    padding-left: 65px;
}

.btn {
    display: flex;
    align-items: center;
    justify-content: center;
    width: 265px;
    height: 117px;
    border-radius: 10px;
    font-size: 51px;
    color: #fff;
}

.btn-buy { background: #d44f30; }
.btn-sell { margin-left: 52px; background: #5579e6; }

.action {
    display: flex;
    flex-direction: column;
    align-items: center;
    width: 148px;
    font-size: 34px;
    line-height: 64px;
    color: #444;
}

.btn-sell + .action {
    margin-left: 64px;
}

.action svg {
    width: 66px;
    height: 66px;
}

.act-line {
    fill: none;
    stroke: #3a3a3a;
    stroke-width: 10px;
    stroke-linecap: round;
    stroke-linejoin: round;
}

.home-bar {
    width: 493px;
    height: 12px;
    margin: 13px auto 0;
    border-radius: 6px;
    background: #6b6b6b;
}
```
